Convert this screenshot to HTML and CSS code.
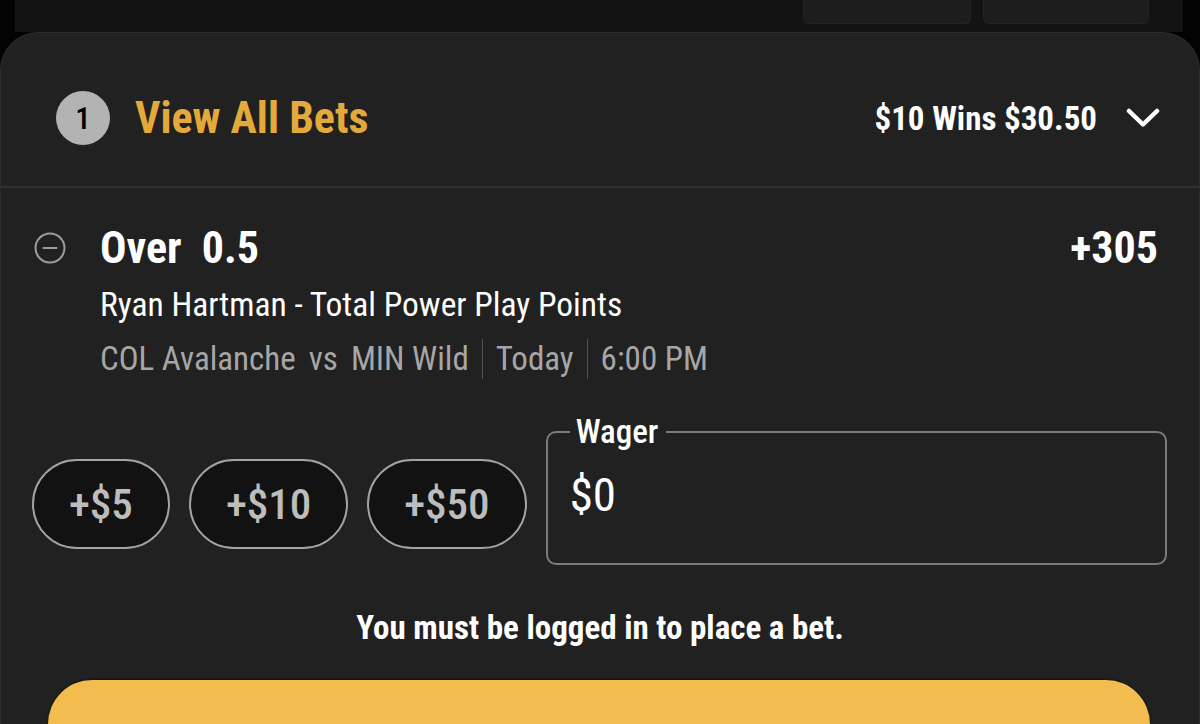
FILE: index.html
```html
<!DOCTYPE html>
<html lang="en">
<head>
<meta charset="utf-8">
<title>Bet Slip</title>
<link rel="stylesheet" href="styles.css">
</head>
<body>
<div class="page">
  <div class="backdrop">
    <div class="tab"></div>
    <div class="tab tab-2"></div>
  </div>
  <section class="slip">
    <header class="slip-head">
      <span class="count">1</span>
      <span class="view-all">View All Bets</span>
      <span class="summary">$10 Wins $30.50</span>
      <svg class="chevron" width="34" height="20" viewBox="0 0 34 20" aria-hidden="true">
        <path d="M3 3 L17 16.5 L31 3" fill="none" stroke="#fff" stroke-width="4.5" stroke-linecap="round" stroke-linejoin="round"/>
      </svg>
    </header>
    <div class="bet">
      <svg class="remove" width="32" height="32" viewBox="0 0 32 32" aria-hidden="true">
        <circle cx="16" cy="16" r="14.5" fill="none" stroke="#9c9c9c" stroke-width="2"/>
        <line x1="9.5" y1="16" x2="22.5" y2="16" stroke="#9c9c9c" stroke-width="2" stroke-linecap="round"/>
      </svg>
      <div class="selection"><span>Over</span><span>0.5</span></div>
      <div class="odds">+305</div>
      <div class="market">Ryan Hartman - Total Power Play Points</div>
      <div class="event">
        <span>COL Avalanche</span><span>vs</span><span>MIN Wild</span>
        <span class="sep"></span><span>Today</span><span class="sep"></span><span>6:00 PM</span>
      </div>
    </div>
    <div class="wager-row">
      <button class="chip">+$5</button>
      <button class="chip">+$10</button>
      <button class="chip">+$50</button>
      <fieldset class="wager">
        <legend>Wager</legend>
        <div class="amount">$0</div>
      </fieldset>
    </div>
    <p class="notice">You must be logged in to place a bet.</p>
    <div class="cta"></div>
  </section>
</div>
</body>
</html>
```
FILE: styles.css
```css
* { box-sizing: border-box; }
html, body { margin: 0; height: 100%; }
body {
  background: #030303;
  font-family: "Roboto Condensed", "Roboto", "Liberation Sans", sans-serif;
  color: #fff;
  overflow: hidden;
}
.page { width: 1200px; height: 724px; display: flex; flex-direction: column; overflow: hidden; }

.backdrop {
  height: 32px;
  margin: 0 17px 0 15px;
  background: #131313;
  display: flex;
  justify-content: flex-end;
  gap: 12px;
  padding-right: 34px;
  flex-shrink: 0;
}
.tab {
  width: 168px;
  height: 24px;
  background: #1d1d1d;
  border: 1px solid #242424;
  border-top: none;
  border-radius: 0 0 6px 6px;
}
.tab-2 { width: 166px; }

.slip {
  flex: 1;
  min-height: 0;
  background: #212121;
  border: 1px solid #2d2d2d;
  border-bottom: none;
  border-radius: 38px 38px 0 0;
  display: flex;
  flex-direction: column;
  overflow: hidden;
}

.slip-head {
  display: flex;
  align-items: center;
  padding: 58px 39px 41px 55px;
  border-bottom: 2px solid #303030;
}
.count {
  width: 54px;
  height: 54px;
  border-radius: 50%;
  background: #b3b3b3;
  color: #000;
  font-size: 31px;
  font-weight: 500;
  display: flex;
  align-items: center;
  justify-content: center;
}
.view-all {
  margin-left: 25px;
  font-size: 44px;
  font-weight: 700;
  color: #e3aa3b;
  flex: 1;
}
.summary { font-size: 33px; font-weight: 700; }
.chevron { margin-left: 29px; }

.bet {
  display: grid;
  grid-template-columns: 32px 1fr auto;
  column-gap: 34px;
  padding: 34px 41px 0 33px;
}
.remove { align-self: center; }
.selection {
  font-size: 44px;
  font-weight: 700;
  line-height: 52px;
  display: flex;
  gap: 20px;
}
.odds { font-size: 44px; font-weight: 700; line-height: 52px; }
.market {
  grid-column: 2 / 4;
  font-size: 33.5px;
  line-height: 38px;
  margin-top: 12px;
}
.event {
  grid-column: 2 / 4;
  display: flex;
  align-items: stretch;
  gap: 13px;
  font-size: 33px;
  line-height: 40px;
  color: #a6a6a6;
  margin-top: 15px;
}
.sep { width: 1px; background: #505050; }

.wager-row {
  display: flex;
  align-items: flex-end;
  gap: 19px;
  padding: 0 32px 0 31px;
  margin-top: 37px;
}
.chip {
  height: 90px;
  margin: 0 0 16px;
  padding: 0 35px;
  border: 2px solid #a3a3a3;
  border-radius: 45px;
  background: #121212;
  color: #bdbdbd;
  font-family: inherit;
  font-size: 43px;
  font-weight: 500;
}
.wager {
  flex: 1;
  margin: 0;
  height: 149px;
  padding: 0 22px;
  border: 2px solid #7b7b7b;
  border-radius: 10px;
}
.wager legend {
  padding: 0 8px 0 6px;
  font-size: 33px;
  line-height: 32px;
  font-weight: 500;
  color: #fff;
}
.amount {
  font-size: 47px;
  line-height: 54px;
  margin-top: 20px;
}

.notice {
  margin: 44px 0 0;
  text-align: center;
  font-size: 33px;
  font-weight: 700;
  line-height: 38px;
}
.cta {
  flex: 1;
  margin: 33px 49px 0 47px;
  background: #f2bc4f;
  border-radius: 62px 62px 0 0;
  box-shadow: 0 -1px 2px rgba(0,0,0,0.5);
}
```
